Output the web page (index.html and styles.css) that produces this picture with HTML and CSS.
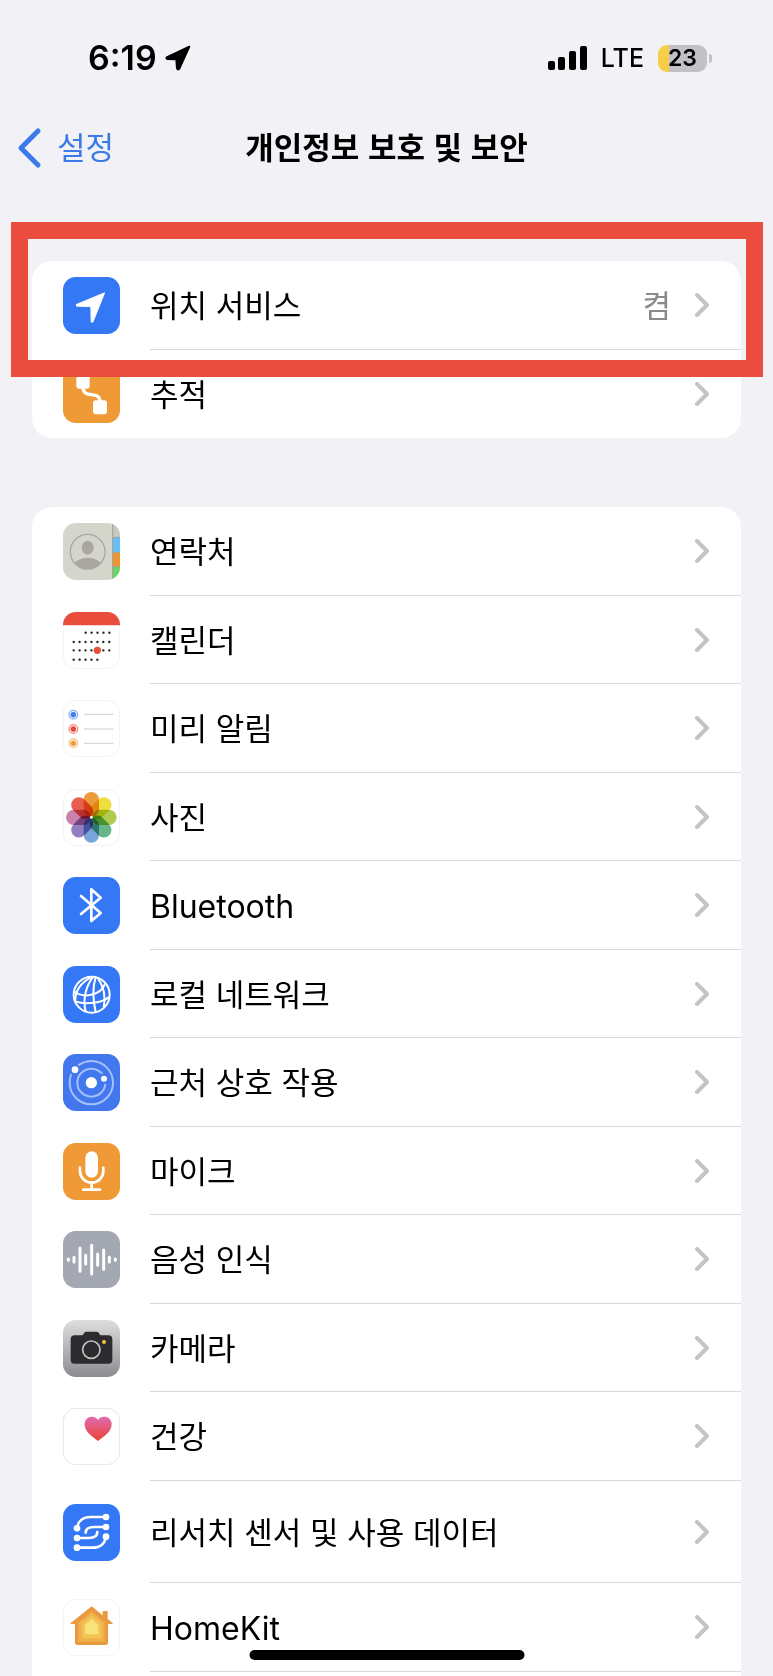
FILE: index.html
```html
<!DOCTYPE html>
<html lang="ko">
<head>
    <meta charset="UTF-8">
    <meta name="viewport" content="width=device-width, initial-scale=1.0">
    <title>개인정보 보호 및 보안</title>
    <link rel="stylesheet" href="styles.css">
</head>
<body>
    <div class="status-bar">
        <div class="status-left">
            <span class="time">6:19</span>
            <svg class="status-arrow" viewBox="0 0 78 78"><path d="M73 5 L5 37 Q3 41 7 42 L34 43 L36 70 Q39 76 43 71 Z"/></svg>
        </div>
        <div class="status-right">
            <svg class="signal" viewBox="0 0 39 24">
                <rect x="0" y="15" width="7" height="9" rx="2"/>
                <rect x="10" y="11" width="7" height="13" rx="2"/>
                <rect x="21" y="5" width="7" height="19" rx="2"/>
                <rect x="32" y="0" width="7" height="24" rx="2"/>
            </svg>
            <span class="network">LTE</span>
            <span class="battery">23</span>
        </div>
    </div>

    <header class="navbar">
        <a href="#" class="back">
            <svg viewBox="0 0 22 38"><path d="M20 2 L3 19 L20 36"/></svg>
            <span>설정</span>
        </a>
        <h1>개인정보 보호 및 보안</h1>
    </header>

    <main>
        <ul class="group group-top">
            <li>
                <a href="#" class="row">
                    <svg class="icon" viewBox="0 0 171 171">
                        <rect width="171" height="171" rx="38" fill="#3478f6"/>
                        <path d="M124 48 L41 83 Q40 87 43 87 L84 88 L85 133 Q87 137 90 133 Z" fill="#fff" stroke="#fff" stroke-width="4" stroke-linejoin="round"/>
                    </svg>
                    <span class="row-body"><span class="label">위치 서비스</span><span class="value">켬</span><svg class="chevron" viewBox="0 0 14 24"><path d="M2 2 L12 12 L2 22"/></svg></span>
                </a>
            </li>
            <li>
                <a href="#" class="row">
                    <svg class="icon" viewBox="0 0 171 171">
                        <rect width="171" height="171" rx="38" fill="#f09a37"/>
                        <rect x="40" y="27" width="40" height="41" rx="9" fill="#fff"/>
                        <rect x="90" y="103" width="42" height="42" rx="9" fill="#fff"/>
                        <path d="M60 66 C62 100 109 72 111 106" fill="none" stroke="#fff" stroke-width="10"/>
                    </svg>
                    <span class="row-body"><span class="label">추적</span><svg class="chevron" viewBox="0 0 14 24"><path d="M2 2 L12 12 L2 22"/></svg></span>
                </a>
            </li>
        </ul>

        <ul class="group group-apps">
            <li>
                <a href="#" class="row">
                    <svg class="icon" viewBox="0 0 171 171">
                        <clipPath id="contacts-clip"><rect width="171" height="171" rx="38"/></clipPath>
                        <clipPath id="contacts-face"><circle cx="74" cy="86" r="51"/></clipPath>
                        <g clip-path="url(#contacts-clip)">
                            <rect width="171" height="171" fill="#d5d6cb"/>
                            <rect x="149" width="22" height="43" fill="#c9c9bd"/>
                            <rect x="149" y="43" width="22" height="44" fill="#64c0f8"/>
                            <rect x="149" y="88" width="22" height="43" fill="#ee9530"/>
                            <rect x="149" y="132" width="22" height="39" fill="#66d668"/>
                            <path d="M149 0 V171 M149 43 H171 M149 88 H171 M149 131 H171" stroke="#a09f94" stroke-width="3"/>
                        </g>
                        <g clip-path="url(#contacts-face)" fill="#aca6a1">
                            <ellipse cx="74" cy="74" rx="18" ry="21"/>
                            <ellipse cx="74" cy="134" rx="44" ry="30"/>
                        </g>
                        <circle cx="74" cy="86" r="52" fill="none" stroke="#aca6a1" stroke-width="4"/>
                    </svg>
                    <span class="row-body"><span class="label">연락처</span><svg class="chevron" viewBox="0 0 14 24"><path d="M2 2 L12 12 L2 22"/></svg></span>
                </a>
            </li>
            <li>
                <a href="#" class="row">
                    <svg class="icon" viewBox="0 0 171 171">
                        <rect class="tile" x="1" y="1" width="169" height="169" rx="38"/>
                        <path d="M0 40 V38 A38 38 0 0 1 38 0 H133 A38 38 0 0 1 171 38 V40 Z" fill="#e94e3d"/>
                        <path class="dots" d="M68 62 H140 M32 90 H140 M32 115 H140 M32 143 H104"/>
                        <circle cx="103" cy="115" r="11" fill="#e94e3d"/>
                    </svg>
                    <span class="row-body"><span class="label">캘린더</span><svg class="chevron" viewBox="0 0 14 24"><path d="M2 2 L12 12 L2 22"/></svg></span>
                </a>
            </li>
            <li>
                <a href="#" class="row">
                    <svg class="icon" viewBox="0 0 171 171">
                        <rect class="tile" x="1" y="1" width="169" height="169" rx="38"/>
                        <g fill="#3f7fe8" stroke="#3f7fe8"><circle cx="31" cy="44" r="8"/><circle cx="31" cy="44" r="13" fill="none" stroke-opacity=".6" stroke-width="4"/></g>
                        <g fill="#e4493f" stroke="#e4493f"><circle cx="31" cy="87" r="8"/><circle cx="31" cy="87" r="13" fill="none" stroke-opacity=".6" stroke-width="4"/></g>
                        <g fill="#ee9c3a" stroke="#ee9c3a"><circle cx="31" cy="130" r="8"/><circle cx="31" cy="130" r="13" fill="none" stroke-opacity=".6" stroke-width="4"/></g>
                        <path d="M63 43 H151 M63 87 H151 M63 130 H151" stroke="#cfcfd2" stroke-width="3"/>
                    </svg>
                    <span class="row-body"><span class="label">미리 알림</span><svg class="chevron" viewBox="0 0 14 24"><path d="M2 2 L12 12 L2 22"/></svg></span>
                </a>
            </li>
            <li>
                <a href="#" class="row">
                    <svg class="icon" viewBox="0 0 171 171">
                        <rect class="tile" x="1" y="1" width="169" height="169" rx="38"/>
                        <g class="petals" transform="translate(85 85)">
                            <rect x="-23" y="-76" width="46" height="74" rx="23" fill="#ee9c3a"/>
                            <rect x="-23" y="-76" width="46" height="74" rx="23" fill="#f0de3c" transform="rotate(45)"/>
                            <rect x="-23" y="-76" width="46" height="74" rx="23" fill="#b0cc50" transform="rotate(90)"/>
                            <rect x="-23" y="-76" width="46" height="74" rx="23" fill="#69b58a" transform="rotate(135)"/>
                            <rect x="-23" y="-76" width="46" height="74" rx="23" fill="#78a5da" transform="rotate(180)"/>
                            <rect x="-23" y="-76" width="46" height="74" rx="23" fill="#9180bd" transform="rotate(225)"/>
                            <rect x="-23" y="-76" width="46" height="74" rx="23" fill="#c983ae" transform="rotate(270)"/>
                            <rect x="-23" y="-76" width="46" height="74" rx="23" fill="#e85f50" transform="rotate(315)"/>
                        </g>
                        <circle cx="85" cy="85" r="4" fill="#fff"/>
                    </svg>
                    <span class="row-body"><span class="label">사진</span><svg class="chevron" viewBox="0 0 14 24"><path d="M2 2 L12 12 L2 22"/></svg></span>
                </a>
            </li>
            <li>
                <a href="#" class="row">
                    <svg class="icon" viewBox="0 0 171 171">
                        <rect width="171" height="171" rx="38" fill="#3478f6"/>
                        <path d="M54 57 L113 108 L85 132 V37 L113 62 L54 111" fill="none" stroke="#fff" stroke-width="8" stroke-linecap="round" stroke-linejoin="round"/>
                    </svg>
                    <span class="row-body"><span class="label latin">Bluetooth</span><svg class="chevron" viewBox="0 0 14 24"><path d="M2 2 L12 12 L2 22"/></svg></span>
                </a>
            </li>
            <li>
                <a href="#" class="row">
                    <svg class="icon" viewBox="0 0 171 171">
                        <rect width="171" height="171" rx="38" fill="#3478f6"/>
                        <g fill="none" stroke="#fff" stroke-width="6">
                            <circle cx="86" cy="86" r="54"/>
                            <path d="M88 32 C60 46 36 68 37 106"/>
                            <path d="M91 32 C70 58 58 98 68 136"/>
                            <path d="M98 33 C88 66 90 104 98 138"/>
                            <path d="M104 35 C122 62 130 90 122 124"/>
                            <path d="M33 76 C60 98 112 90 127 52"/>
                            <path d="M36 106 C66 116 118 112 139 92"/>
                        </g>
                    </svg>
                    <span class="row-body"><span class="label">로컬 네트워크</span><svg class="chevron" viewBox="0 0 14 24"><path d="M2 2 L12 12 L2 22"/></svg></span>
                </a>
            </li>
            <li>
                <a href="#" class="row">
                    <svg class="icon" viewBox="0 0 171 171">
                        <rect width="171" height="171" rx="38" fill="#4277ee"/>
                        <g fill="none" stroke="#a5c1fa" stroke-width="6">
                            <circle cx="85" cy="86" r="42"/>
                            <circle cx="85" cy="86" r="65"/>
                        </g>
                        <circle cx="36" cy="47" r="17" fill="#4277ee"/>
                        <circle cx="123" cy="74" r="16" fill="#4277ee"/>
                        <g fill="#fff">
                            <circle cx="85" cy="86" r="17"/>
                            <circle cx="36" cy="47" r="10"/>
                            <circle cx="123" cy="74" r="9"/>
                        </g>
                    </svg>
                    <span class="row-body"><span class="label">근처 상호 작용</span><svg class="chevron" viewBox="0 0 14 24"><path d="M2 2 L12 12 L2 22"/></svg></span>
                </a>
            </li>
            <li>
                <a href="#" class="row">
                    <svg class="icon" viewBox="0 0 171 171">
                        <rect width="171" height="171" rx="38" fill="#f09a37"/>
                        <rect x="67" y="25" width="38" height="79" rx="19" fill="#fff"/>
                        <path d="M51 74 V84 A35 35 0 0 0 121 84 V74 M86 120 V140 M61 140 H111" fill="none" stroke="#fff" stroke-width="8" stroke-linecap="round"/>
                    </svg>
                    <span class="row-body"><span class="label">마이크</span><svg class="chevron" viewBox="0 0 14 24"><path d="M2 2 L12 12 L2 22"/></svg></span>
                </a>
            </li>
            <li>
                <a href="#" class="row">
                    <svg class="icon" viewBox="0 0 171 171">
                        <rect width="171" height="171" rx="38" fill="#a4a8b3"/>
                        <path d="M16 84 V88 M33 79 V93 M51 51 V121 M68 73 V99 M86 43 V129 M104 69 V103 M122 57 V115 M139 79 V93 M157 84 V88" stroke="#fff" stroke-width="9" stroke-linecap="round"/>
                    </svg>
                    <span class="row-body"><span class="label">음성 인식</span><svg class="chevron" viewBox="0 0 14 24"><path d="M2 2 L12 12 L2 22"/></svg></span>
                </a>
            </li>
            <li>
                <a href="#" class="row">
                    <svg class="icon" viewBox="0 0 171 171">
                        <linearGradient id="camera-bg" x1="0" y1="0" x2="0" y2="1">
                            <stop offset="0" stop-color="#dededf"/>
                            <stop offset="1" stop-color="#8c8b90"/>
                        </linearGradient>
                        <rect width="171" height="171" rx="38" fill="url(#camera-bg)"/>
                        <path d="M35 46 H56 Q60 46 62 41 Q64 35 70 35 H101 Q107 35 109 41 Q111 46 115 46 H136 Q148 46 148 58 V119 Q148 131 136 131 H35 Q23 131 23 119 V58 Q23 46 35 46 Z" fill="#2c2c2e"/>
                        <circle cx="85" cy="89" r="26" fill="none" stroke="#c4c4c7" stroke-width="5"/>
                        <circle cx="123" cy="66" r="6" fill="#f5c242"/>
                    </svg>
                    <span class="row-body"><span class="label">카메라</span><svg class="chevron" viewBox="0 0 14 24"><path d="M2 2 L12 12 L2 22"/></svg></span>
                </a>
            </li>
            <li>
                <a href="#" class="row">
                    <svg class="icon" viewBox="0 0 171 171">
                        <linearGradient id="heart" x1="0" y1="0" x2="0" y2="1">
                            <stop offset="0" stop-color="#e06bb0"/>
                            <stop offset="1" stop-color="#eb4130"/>
                        </linearGradient>
                        <rect class="tile tile-dark" x="1" y="1" width="169" height="169" rx="38"/>
                        <path d="M105 99 C88 86 65 72 65 49 C65 25 94 19 105 36 C116 19 146 25 146 49 C146 72 122 86 105 99 Z" fill="url(#heart)"/>
                    </svg>
                    <span class="row-body"><span class="label">건강</span><svg class="chevron" viewBox="0 0 14 24"><path d="M2 2 L12 12 L2 22"/></svg></span>
                </a>
            </li>
            <li>
                <a href="#" class="row row-tall">
                    <svg class="icon" viewBox="0 0 171 171">
                        <rect width="171" height="171" rx="38" fill="#3478f6"/>
                        <g fill="none" stroke="#fff" stroke-width="8" stroke-linecap="round">
                            <path d="M42 73 C45 50 62 39 82 39 H129"/>
                            <path d="M129 69 H94 C77 69 68 75 68 86"/>
                            <path d="M42 102 H78 C95 102 103 96 103 84"/>
                            <path d="M129 97 C126 120 110 131 90 131 H42"/>
                        </g>
                        <g fill="#fff">
                            <circle cx="129" cy="39" r="10"/><circle cx="129" cy="69" r="10"/><circle cx="129" cy="98" r="10"/>
                            <circle cx="42" cy="73" r="10"/><circle cx="42" cy="102" r="10"/><circle cx="42" cy="131" r="10"/>
                        </g>
                    </svg>
                    <span class="row-body"><span class="label">리서치 센서 및 사용 데이터</span><svg class="chevron" viewBox="0 0 14 24"><path d="M2 2 L12 12 L2 22"/></svg></span>
                </a>
            </li>
            <li>
                <a href="#" class="row">
                    <svg class="icon" viewBox="0 0 171 171">
                        <rect class="tile" x="1" y="1" width="169" height="169" rx="38"/>
                        <path d="M86 22 L119 49 V38 Q119 36 121 36 H132 Q134 36 134 38 V60 L149 72 Q150 75 147 75 H135 V131 Q135 138 128 138 H43 Q36 138 36 131 V75 H24 Q21 75 23 72 Z" fill="#e99a41"/>
                        <path d="M86 38 L125 70 V128 H46 V70 Z" fill="#f0b04a"/>
                        <path d="M86 49 L116 73 V118 H56 V73 Z" fill="#f3c453"/>
                        <path d="M86 60 L106 77 V106 H66 V77 Z" fill="#f9e27c"/>
                    </svg>
                    <span class="row-body"><span class="label latin">HomeKit</span><svg class="chevron" viewBox="0 0 14 24"><path d="M2 2 L12 12 L2 22"/></svg></span>
                </a>
            </li>
        </ul>
    </main>

    <div class="home-indicator"></div>
</body>
</html>
```

FILE: styles.css
```css
*, *::before, *::after {
    box-sizing: border-box;
}
body {
    margin: 0;
    min-height: 100vh;
    background-color: #f1f1f6;
    color: #000;
    font-family: "Noto Sans CJK KR", Inter, sans-serif;
    font-size: 31px;
    line-height: 40px;
}
a {
    color: inherit;
    text-decoration: none;
}

/* 상태 표시줄 */
.status-bar {
    display: flex;
    justify-content: space-between;
    align-items: center;
    height: 116px;
    padding: 0 66px 0 88px;
    font-family: Inter, sans-serif;
}
.status-left, .status-right {
    display: flex;
    align-items: center;
}
.status-left {
    gap: 8px;
}
.status-right {
    gap: 14px;
}
.time {
    font-size: 34px;
    font-weight: 600;
}
.status-arrow {
    width: 26px;
    height: 26px;
    stroke: #000;
    stroke-width: 6;
    stroke-linejoin: round;
}
.signal {
    width: 39px;
    height: 24px;
}
.network {
    font-size: 25px;
    font-weight: 500;
}
.battery {
    position: relative;
    width: 49px;
    height: 27px;
    border-radius: 9px;
    background: linear-gradient(to right, #f7ce46 11px, #c1c1c6 11px);
    font-size: 23px;
    font-weight: 600;
    line-height: 27px;
    text-align: center;
}
.battery::after {
    content: "";
    position: absolute;
    top: 9px;
    right: -5px;
    width: 3px;
    height: 9px;
    border-radius: 0 3px 3px 0;
    background-color: #c1c1c6;
}

/* 내비게이션 */
.navbar {
    display: grid;
    grid-template-columns: 1fr auto 1fr;
    align-items: center;
    height: 64px;
    padding: 0 18px;
}
.navbar h1 {
    margin: 0;
    padding-bottom: 4px;
    font-size: 31px;
    font-weight: 600;
}
.back {
    display: flex;
    align-items: center;
    gap: 17px;
    color: #3a7be9;
}
.back span {
    padding-bottom: 4px;
}
.back svg {
    width: 22px;
    height: 38px;
    fill: none;
    stroke: #3a7be9;
    stroke-width: 5;
    stroke-linecap: round;
    stroke-linejoin: round;
    overflow: visible;
}

/* 목록 */
main {
    padding: 81px 32px 0;
}
.group {
    position: relative;
    margin: 0;
    padding: 0;
    list-style: none;
    background-color: #fff;
    border-radius: 20px;
}
.group-apps {
    margin-top: 69px;
    padding-bottom: 4px;
    border-radius: 20px 20px 0 0;
}
.row {
    display: flex;
    align-items: stretch;
    gap: 30px;
    height: 89px;
    padding-left: 31px;
}
li:nth-child(even) .row {
    height: 88px;
}
li .row-tall.row-tall {
    height: 102px;
}
.icon {
    flex: none;
    align-self: center;
    width: 57px;
    height: 57px;
}
.row-body {
    flex: 1;
    display: flex;
    align-items: center;
    gap: 24px;
    padding-right: 32px;
    border-bottom: 1px solid #d8d8da;
}
.group-top li:last-child .row-body {
    border-bottom: none;
}
.label {
    flex: 1;
    padding-bottom: 2px;
}
.label.latin {
    padding: 4px 0 0;
    font-family: Inter, sans-serif;
    font-size: 32px;
}
.value {
    padding-bottom: 2px;
    color: #8a8a8e;
}
.chevron {
    width: 14px;
    height: 24px;
    fill: none;
    stroke: #c4c4c6;
    stroke-width: 4;
    stroke-linecap: round;
    stroke-linejoin: round;
}

/* 강조 테두리 */
.group-top::after {
    content: "";
    position: absolute;
    top: -39px;
    left: -21px;
    right: -22px;
    height: 155px;
    border: 17px solid #ea4d3d;
    pointer-events: none;
}

/* 아이콘 */
.tile {
    fill: #fff;
    stroke: #ececee;
    stroke-width: 2;
}
.tile-dark {
    stroke: #d9d9db;
}
.dots {
    stroke: #1c1c1e;
    stroke-width: 7;
    stroke-linecap: round;
    stroke-dasharray: 0 17.8;
}
.petals {
    isolation: isolate;
}
.petals rect {
    mix-blend-mode: multiply;
}

.home-indicator {
    position: fixed;
    bottom: 16px;
    left: 50%;
    width: 275px;
    height: 10px;
    border-radius: 5px;
    background-color: #000;
    transform: translateX(-50%);
}
```
